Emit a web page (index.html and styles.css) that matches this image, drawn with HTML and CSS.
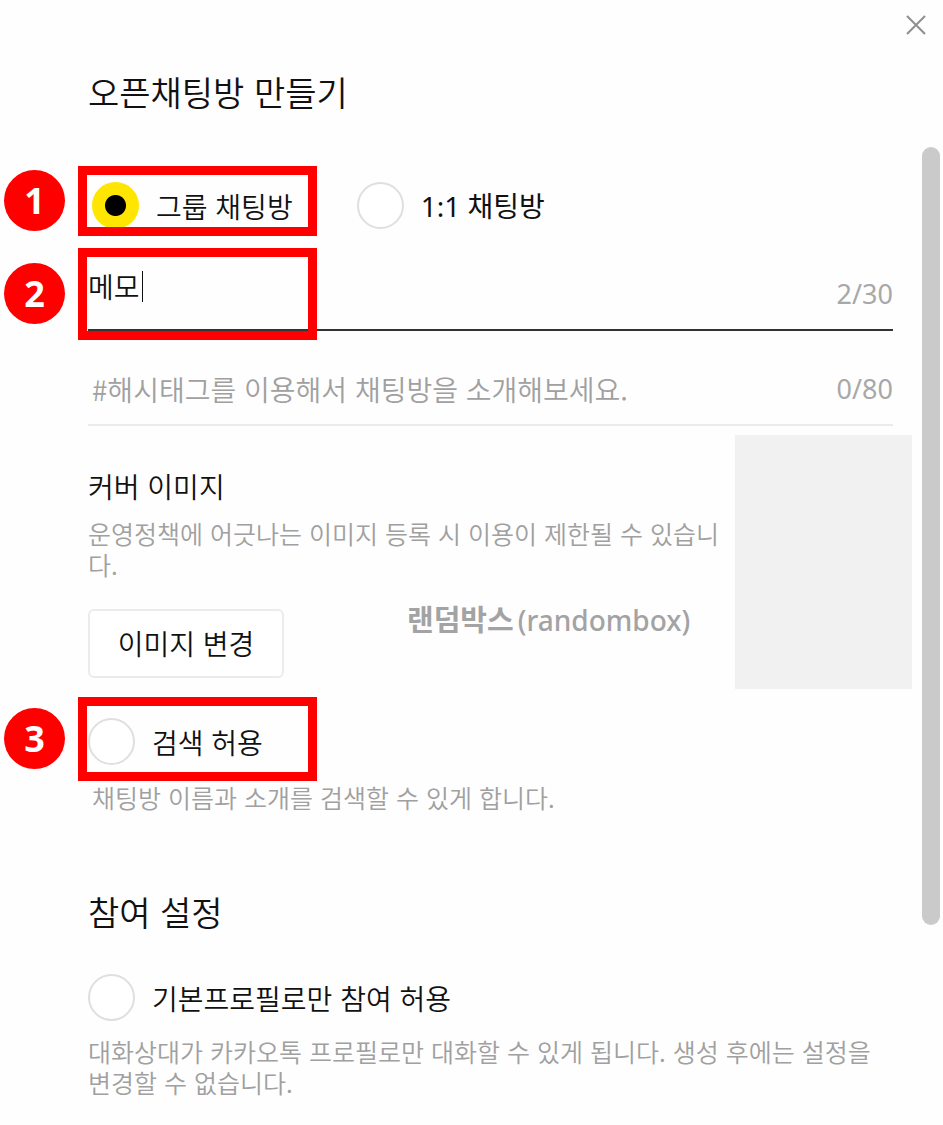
FILE: index.html
```html
<!DOCTYPE html>
<html lang="ko">
	<head>
		<meta charset="utf-8">
		<title>오픈채팅방 만들기</title>
		<link rel="stylesheet" href="styles.css">
	</head>
	<body>
		<div class="dialog">
			<button class="close" type="button" aria-label="닫기">
				<svg width="22" height="22" viewBox="0 0 22 22"><path d="M2 2L20 20M20 2L2 20" stroke="#8f8f8f" stroke-width="2" fill="none"/></svg>
			</button>

			<form class="formular">
				<h1>오픈채팅방 만들기</h1>

				<div class="types marked">
					<label class="option"><input type="radio" name="type" checked>그룹 채팅방</label>
					<label class="option"><input type="radio" name="type">1:1 채팅방</label>
					<span class="frame frame_type"></span>
					<span class="badge badge_type">1</span>
				</div>

				<div class="field field_name marked">
					<input type="text" id="name" aria-label="채팅방 이름" value="메모">
					<span class="caret"></span>
					<label class="counter" for="name">2/30</label>
					<span class="frame frame_name"></span>
					<span class="badge badge_name">2</span>
				</div>

				<div class="field field_intro">
					<input type="text" id="intro" aria-label="채팅방 소개" placeholder="#해시태그를 이용해서 채팅방을 소개해보세요.">
					<label class="counter" for="intro">0/80</label>
				</div>

				<div class="cover">
					<div class="cover_text">
						<h3>커버 이미지</h3>
						<p class="hint">운영정책에 어긋나는 이미지 등록 시 이용이 제한될 수 있습니다.</p>
						<button class="change" type="button">이미지 변경</button>
					</div>
					<div class="cover_image"></div>
					<span class="watermark"><b>랜덤박스</b>(randombox)</span>
				</div>

				<div class="search marked">
					<label class="option"><input type="checkbox" name="search">검색 허용</label>
					<span class="frame frame_search"></span>
					<span class="badge badge_search">3</span>
				</div>
				<p class="hint hint_search">채팅방 이름과 소개를 검색할 수 있게 합니다.</p>

				<h2>참여 설정</h2>
				<label class="option"><input type="checkbox" name="profile">기본프로필로만 참여 허용</label>
				<p class="hint">대화상대가 카카오톡 프로필로만 대화할 수 있게 됩니다. 생성 후에는 설정을 변경할 수 없습니다.</p>
			</form>

			<div class="scroll"></div>
		</div>
	</body>
</html>
```
FILE: styles.css
```css
*{
	box-sizing: border-box;
}

body{
	margin: 0;
	background-color: #fefefe;
	color: #111;
	font-family: "Noto Sans CJK KR", sans-serif;
	font-size: 28px;
	font-weight: 350;
	line-height: 40px;
}

h1, h2, h3, p{
	margin: 0;
	font-weight: 350;
}

h1, h2{
	font-size: 34px;
	line-height: 50px;
}

h3{
	font-size: 28px;
}

input, button{
	font: inherit;
	color: inherit;
}

.dialog{
	position: relative;
}

.formular{
	padding: 67px 50px 26px 88px;
}

.close{
	position: absolute;
	top: 14px;
	right: 16px;
	display: flex;
	padding: 0;
	border: none;
	background: none;
}

.scroll{
	position: absolute;
	top: 147px;
	right: 3px;
	width: 18px;
	height: 778px;
	border-radius: 9px;
	background-color: #cacaca;
}

/* round options */
.option{
	display: flex;
	align-items: center;
	gap: 17px;
}

.option input{
	appearance: none;
	flex: none;
	width: 47px;
	height: 47px;
	margin: 0;
	border: 2px solid #dfdfdf;
	border-radius: 50%;
	background-color: #fff;
}

.option input:checked{
	border: none;
	background: radial-gradient(circle, #000 10px, #ffe600 11px);
}

.types{
	display: flex;
	gap: 64px;
	margin-top: 65px;
	padding-left: 4px;
}

.types .option + .option{
	font-family: "Noto Sans", "Noto Sans CJK KR", sans-serif;
	font-weight: 400;
}

/* red numbered marks */
.marked{
	position: relative;
}

.frame{
	position: absolute;
	left: -10px;
	width: 239px;
	border: 9px solid #f00;
	pointer-events: none;
}

.badge{
	position: absolute;
	left: -84px;
	width: 61px;
	height: 61px;
	border-radius: 50%;
	background-color: #f00;
	color: #fff;
	font: bold 36px/61px "Noto Sans", sans-serif;
	text-align: center;
}

.frame_type{
	top: -16px;
	height: 70px;
}

.badge_type{
	top: -12px;
}

.frame_name{
	top: -3px;
	height: 92px;
}

.badge_name{
	top: 12px;
}

.frame_search{
	top: -21px;
	height: 84px;
}

.badge_search{
	top: -10px;
}

/* text fields */
.field{
	display: flex;
	align-items: flex-end;
	border-bottom: 2px solid #ebebeb;
}

.field input{
	flex: 1;
	min-width: 0;
	height: 40px;
	padding: 0;
	border: none;
	outline: none;
	background: none;
}

.field input::placeholder{
	color: #a0a0a0;
	opacity: 1;
}

.field_name{
	height: 80px;
	margin-top: 22px;
	padding-bottom: 15px;
	border-color: #333;
}

.field_name input{
	margin-bottom: 8px;
}

.field_intro{
	height: 95px;
	padding-bottom: 15px;
}

.field_intro input{
	padding-left: 4px;
}

.caret{
	position: absolute;
	left: 54px;
	top: 20px;
	width: 1px;
	height: 31px;
	background-color: #111;
}

.counter{
	color: #a8a8a8;
	font-family: "Noto Sans", sans-serif;
	font-size: 27px;
	font-weight: 400;
}

.hint{
	color: #a0a0a0;
	font-size: 25px;
	line-height: 31px;
	word-break: break-all;
}

.cover{
	position: relative;
	display: flex;
	gap: 16px;
	margin: 9px -19px 0 0;
}

.cover_text{
	flex: 1;
	padding-top: 31px;
}

.cover_text .hint{
	margin-top: 12px;
}

.cover_image{
	width: 177px;
	height: 254px;
	background-color: #f1f1f1;
}

.change{
	width: 196px;
	height: 69px;
	margin-top: 29px;
	padding: 0 0 2px;
	border: 2px solid #ebebeb;
	border-radius: 6px;
	background-color: #fff;
}

.watermark{
	position: absolute;
	left: 319px;
	top: 165px;
	color: #a3a3a3;
	font-family: "Noto Sans", "Noto Sans CJK KR", sans-serif;
	font-weight: 500;
}

.watermark b{
	margin-right: 4px;
	font-size: 29px;
}

.search{
	margin-top: 29px;
}

.hint_search{
	margin-top: 17px;
	padding-left: 4px;
}

h2{
	margin: 74px 0 37px;
}

.option + .hint{
	margin-top: 15px;
}
```
